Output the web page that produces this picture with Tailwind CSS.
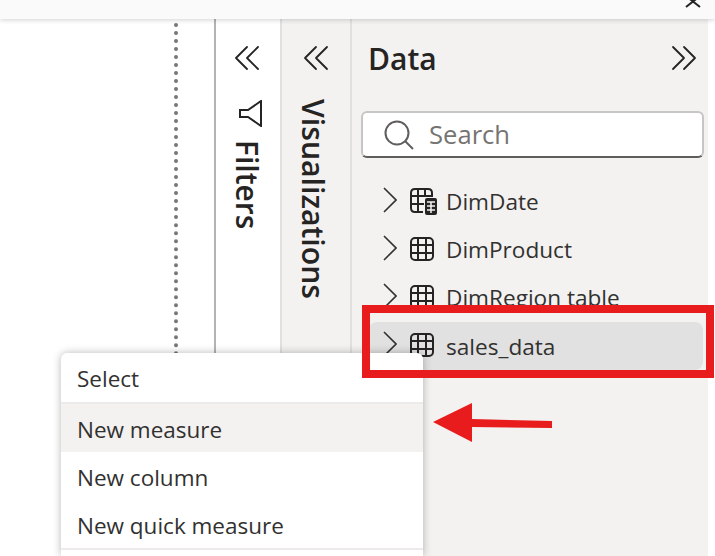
<!DOCTYPE html>
<html lang="en">
	<head>
		<meta charset="UTF-8" />
		<script src="https://cdn.jsdelivr.net/npm/@tailwindcss/browser@4"></script>
		<title>Data pane</title>
	</head>

	<body class="w-[715px] h-[556px] overflow-hidden bg-white relative font-['Open_Sans','Noto_Sans',sans-serif] text-[#252423]">
		<!-- top bar -->
		<div class="h-[19px] w-full bg-[#fafafa] shadow-[0_1px_5px_rgba(0,0,0,0.18)] relative z-10 flex justify-end pr-[12px]">
			<svg class="w-[20px] h-[8px]" viewBox="0 0 20 8" fill="none" stroke="#252423" stroke-width="2">
				<path d="M3 -4 L17 7 M17 -4 L3 7" />
			</svg>
		</div>

		<div class="flex h-[537px]">
			<!-- canvas -->
			<div class="w-[214px] shrink-0 pt-[4px] pl-[174px]">
				<div class="h-full border-l-4 border-dotted border-[#777]"></div>
			</div>

			<!-- filters -->
			<div class="w-[66px] shrink-0 border-l-2 border-[#b3b3b0] flex flex-col items-center pt-[26px]">
				<svg class="w-[26px] h-[26px] mr-[2px]" viewBox="0 0 26 26" fill="none" stroke="#252423" stroke-width="1.8" stroke-linecap="round" stroke-linejoin="round">
					<path d="M13 2 L2 13 L13 24 M24 2 L13 13 L24 24" />
				</svg>
				<svg class="w-[24px] h-[27px] mt-[29px] ml-[4px]" viewBox="0 0 24 27" fill="none" stroke="#252423" stroke-width="2">
					<path d="M2 10 H10 L23 1 V26 L10 17 H2 Z" />
				</svg>
				<div class="[writing-mode:vertical-rl] text-[30px] font-semibold leading-[32px] mt-[13px] ml-[-2px]">Filters</div>
			</div>

			<!-- visualizations -->
			<div class="w-[70px] shrink-0 border-l-2 border-[#e0e0e0] bg-[#f3f2f1] flex flex-col items-center pt-[26px]">
				<svg class="w-[26px] h-[26px] mr-[1px]" viewBox="0 0 26 26" fill="none" stroke="#252423" stroke-width="1.8" stroke-linecap="round" stroke-linejoin="round">
					<path d="M13 2 L2 13 L13 24 M24 2 L13 13 L24 24" />
				</svg>
				<div class="[writing-mode:vertical-rl] text-[30.2px] font-semibold leading-[32px] mt-[28px] ml-[-6px]">Visualizations</div>
			</div>

			<!-- data -->
			<div class="w-[358px] shrink-0 border-l-2 border-[#e0e0e0] bg-[#f3f2f1]">
				<div class="flex items-center justify-between pl-[16px] pr-[11px] h-[40px] mt-[20px]">
					<span class="text-[30px] font-semibold leading-none">Data</span>
					<svg class="w-[26px] h-[26px] mb-[2px]" viewBox="0 0 26 26" fill="none" stroke="#252423" stroke-width="1.8" stroke-linecap="round" stroke-linejoin="round">
						<path d="M2 2 L13 13 L2 24 M13 2 L24 13 L13 24" />
					</svg>
				</div>
				<div class="ml-[9px] mt-[32px] w-[343px] h-[47px] bg-white rounded-[6px] border-2 border-[#c8c6c4] border-b-[#605e5c] flex items-center pl-[21px] gap-[15px]">
					<svg class="w-[30px] h-[30px]" viewBox="0 0 30 30" fill="none" stroke="#605e5c" stroke-width="2">
						<circle cx="13" cy="13" r="11.5" />
						<path d="M21 21 L29 29" />
					</svg>
					<span class="text-[25.6px] text-[#767472] leading-none">Search</span>
				</div>

				<div class="mt-[20px] ml-[17px] w-[334px] flex flex-col text-[22.6px] text-[#323130]">
					<div class="h-[48px] flex items-center">
						<svg class="w-[14px] h-[26px] ml-[14px] mb-[4px]" viewBox="0 0 14 26" fill="none" stroke="#323130" stroke-width="1.6"><path d="M1 1 L13 13 L1 25" /></svg>
						<svg class="w-[30px] h-[30px] ml-[12px] mb-[1px]" viewBox="0 0 30 30" fill="none" stroke="#252423" stroke-width="2">
							<path d="M14 25 H6 Q2 25 2 21 V6 Q2 2 6 2 H19 Q23 2 23 6 V10 M2 9 H23 M2 17 H15 M9 2 V25 M16 2 V10" />
							<rect x="16" y="11" width="12" height="17" rx="2" fill="#252423" stroke="none" />
							<path d="M18 15 H26 M18 19 H26 M18 23 H26 M22 15 V26" stroke="#f3f2f1" stroke-width="1.5" />
						</svg>
						<span class="ml-[7px]">DimDate</span>
					</div>
					<div class="h-[48px] flex items-center">
						<svg class="w-[14px] h-[26px] ml-[14px] mb-[4px]" viewBox="0 0 14 26" fill="none" stroke="#323130" stroke-width="1.6"><path d="M1 1 L13 13 L1 25" /></svg>
						<svg class="w-[24px] h-[24px] ml-[13px] mb-[3px]" viewBox="0 0 24 24" fill="none" stroke="#252423" stroke-width="2">
							<rect x="1" y="1" width="22" height="22" rx="4" />
							<path d="M1 8 H23 M1 16 H23 M8 1 V23 M16 1 V23" />
						</svg>
						<span class="ml-[12px]">DimProduct</span>
					</div>
					<div class="h-[48px] flex items-center">
						<svg class="w-[14px] h-[26px] ml-[14px] mb-[4px]" viewBox="0 0 14 26" fill="none" stroke="#323130" stroke-width="1.6"><path d="M1 1 L13 13 L1 25" /></svg>
						<svg class="w-[24px] h-[24px] ml-[13px] mb-[3px]" viewBox="0 0 24 24" fill="none" stroke="#252423" stroke-width="2">
							<rect x="1" y="1" width="22" height="22" rx="4" />
							<path d="M1 8 H23 M1 16 H23 M8 1 V23 M16 1 V23" />
						</svg>
						<span class="ml-[12px]">DimRegion table</span>
					</div>
					<div class="h-[48px] flex items-center bg-[#e1e1e1] rounded-[8px]">
						<svg class="w-[14px] h-[26px] ml-[14px] mb-[4px]" viewBox="0 0 14 26" fill="none" stroke="#323130" stroke-width="1.6"><path d="M1 1 L13 13 L1 25" /></svg>
						<svg class="w-[24px] h-[24px] ml-[13px] mb-[3px]" viewBox="0 0 24 24" fill="none" stroke="#252423" stroke-width="2">
							<rect x="1" y="1" width="22" height="22" rx="4" />
							<path d="M1 8 H23 M1 16 H23 M8 1 V23 M16 1 V23" />
						</svg>
						<span class="ml-[12px] pt-[1px]">sales_data</span>
					</div>
				</div>
			</div>
		</div>

		<!-- context menu -->
		<div class="absolute left-[61px] top-[353px] w-[362px] h-[203px] bg-white rounded-t-[6px] shadow-[0_0_8px_rgba(0,0,0,0.28)] text-[22.5px] text-[#323130] z-10">
			<div class="h-[49px] flex items-center pl-[16px] pt-[3px]">Select</div>
			<div class="h-[2px] bg-[#edebe9]"></div>
			<div class="h-[48px] flex items-center pl-[16px] pt-[3px] bg-[#f3f2f1]">New measure</div>
			<div class="h-[48px] flex items-center pl-[16px] pt-[3px]">New column</div>
			<div class="h-[48px] flex items-center pl-[16px] pt-[3px]">New quick measure</div>
			<div class="h-[2px] bg-[#edebe9]"></div>
		</div>

		<!-- annotations -->
		<div class="absolute left-[362px] top-[305px] w-[352px] h-[73px] border-[8px] border-[#e81c1c] z-20"></div>
		<svg class="absolute left-[430px] top-[400px] z-20" width="124" height="56" viewBox="0 0 124 56" fill="#e81c1c">
			<path d="M3 22 L42 3 L42 19 L122 21 L122 28 L42 27 L42 42 Z" />
		</svg>
	</body>
</html>
